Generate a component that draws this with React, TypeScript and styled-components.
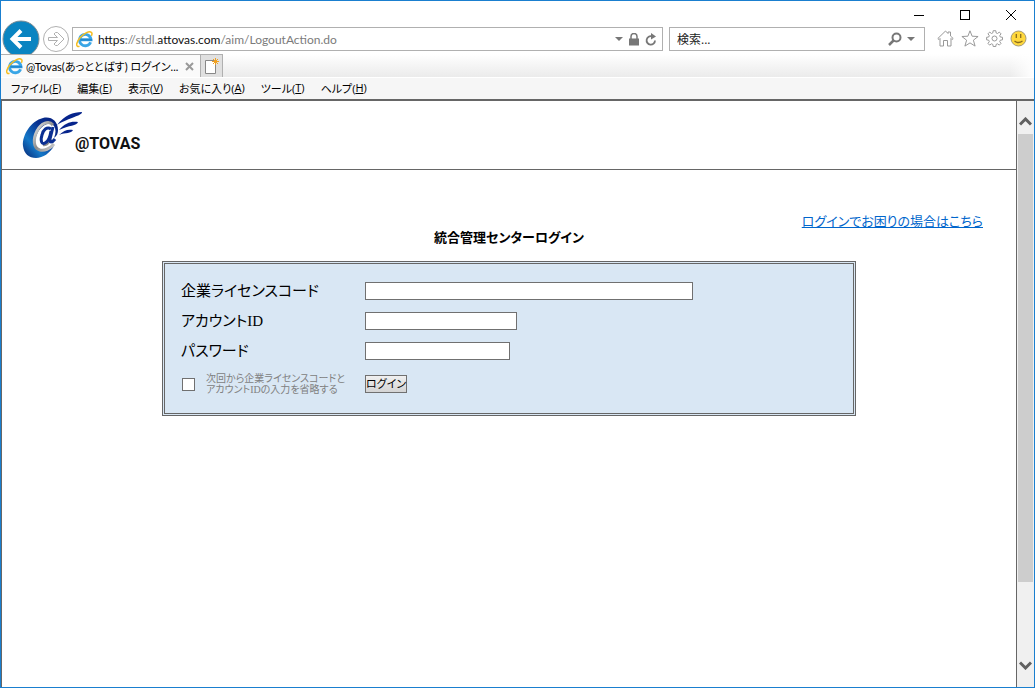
import React, { useState } from 'react';
import styled, { createGlobalStyle, css } from 'styled-components';

const UI = '"Open Sans", "Noto Sans CJK JP", sans-serif';
const NARROW_UI = 'Lato, "Noto Sans CJK JP", sans-serif';
const PAGE = '"Liberation Serif", "Noto Sans CJK JP", sans-serif';

const GlobalStyle = createGlobalStyle`
  * { box-sizing: border-box; }
  body { margin: 0; background: #fff; color: #000; font-family: ${UI}; font-size: 12px; }
  button { font: inherit; color: inherit; }
  svg { display: block; flex: none; }
`;

const Window = styled.div`
  display: flex;
  flex-direction: column;
  min-height: 100vh;
  border: 1px solid #1a7fcf;
  background: #fff;
`;

const CaptionBar = styled.div`
  display: flex;
  justify-content: flex-end;
  height: 26px;
`;

const PlainButton = styled.button`
  display: flex;
  align-items: center;
  justify-content: center;
  flex: none;
  padding: 0;
  border: 0;
  background: transparent;
`;

const CaptionButton = styled(PlainButton)`
  width: 46px;
  height: 28px;
`;

const NavBar = styled.div`
  display: flex;
  align-items: center;
  height: 24px;
  padding: 0 7px 0 1px;
`;

const NavButton = styled(PlainButton)`
  margin-right: 3px;
`;

const Box = styled.div<{ $grow?: boolean }>`
  display: flex;
  align-items: center;
  height: 24px;
  min-width: 0;
  padding-left: 3px;
  border: 1px solid #b0b0b0;
  background: #fff;
  ${(p) =>
    p.$grow
      ? css`flex: 1; gap: 5px; padding-right: 5px;`
      : css`flex: 0 0 256px; gap: 5px; margin-left: 6px; padding-right: 9px;`}
`;

const Address = styled.div`
  flex: 1;
  min-width: 0;
  overflow: hidden;
  white-space: nowrap;
  font-family: ${NARROW_UI};
  color: #7b7b7b;
  b { color: #111; font-weight: 400; }
`;

const SearchInput = styled.input`
  flex: 1;
  min-width: 0;
  padding: 0 4px;
  border: 0;
  outline: 0;
  background: transparent;
  font: 12px ${UI};
  font-feature-settings: 'palt';
  &::placeholder { color: #222; opacity: 1; }
`;

const Tools = styled.div`
  display: flex;
  gap: 7px;
  margin-left: 12px;
  padding-bottom: 2px;
`;

const TabBar = styled.div`
  position: relative;
  display: flex;
  height: 24px;
  margin-top: 3px;
  background:
    linear-gradient(to left, #fff, #fff0 24px),
    linear-gradient(#fff, #ebebeb);
  border-bottom: 1px solid #fff;
`;

const Tab = styled.div`
  display: flex;
  align-items: center;
  gap: 3px;
  width: 199px;
  padding: 0 6px 0 5px;
  border-top: 1px solid #b0b0b0;
  background: #fafafa;
  white-space: nowrap;
  font-family: ${NARROW_UI};
  font-feature-settings: 'palt';
`;

const TabTitle = styled.span`
  flex: 1;
  min-width: 0;
  font-size: 11px;
`;

const NewTab = styled(PlainButton)`
  width: 23px;
  border: 1px solid #b0b0b0;
  border-bottom: 0;
  background: #e0e0e0;
`;

const MenuBar = styled.nav`
  display: flex;
  gap: 16px;
  height: 23px;
  padding: 0 0 2px 10px;
  background: #f6f6f6;
  border-bottom: 2px solid #666;
`;

const MenuItem = styled(PlainButton)`
  font-size: 11px;
  font-feature-settings: 'palt';
  white-space: pre;
`;

const Viewport = styled.div`
  display: flex;
  flex: 1;
`;

const Page = styled.main`
  flex: 1;
  min-width: 0;
  border-left: 1px solid #666;
  border-right: 1px solid #666;
  font-family: ${PAGE};
  font-feature-settings: 'palt';
`;

const PageHeader = styled.header`
  display: flex;
  height: 69px;
  padding: 10px 20px;
  border-bottom: 1px solid #666;
`;

const Wordmark = styled.span`
  margin: 21px 0 0 -9px;
  font: bold 16px/24px Roboto, "Liberation Sans", sans-serif;
  color: #111;
`;

const HelpRow = styled.div`
  display: flex;
  justify-content: flex-end;
  padding: 44px 33px 0 0;
`;

const HelpLink = styled.a`
  font-size: 13px;
  line-height: 16px;
  color: #0066cc;
`;

const Title = styled.h1`
  margin: 0 0 15px;
  text-align: center;
  font-size: 13px;
  line-height: 16px;
  font-weight: 700;
`;

const Panel = styled.form`
  max-width: 694px;
  margin: 0 auto;
  padding: 12px 16px 11px;
  border: 3px double #666;
  background: #d9e7f4;
`;

const Row = styled.div<{ $tall?: boolean }>`
  display: flex;
  align-items: center;
  height: ${(p) => (p.$tall ? 36 : 30)}px;
`;

const Label = styled.label`
  flex: 0 0 184px;
  font-size: 15px;
  line-height: 20px;
`;

const Field = styled.input<{ $width: number }>`
  width: ${(p) => p.$width}px;
  height: 18px;
  padding: 0 2px;
  border: 1px solid #707070;
  border-radius: 0;
  background: #fff;
`;

const Remember = styled.label`
  display: flex;
  align-items: center;
  gap: 11px;
  flex: 0 0 184px;
  font-size: 10px;
  line-height: 11px;
  color: #808080;
`;

const Tick = styled.input`
  appearance: none;
  width: 13px;
  height: 13px;
  margin: 0 0 0 1px;
  border: 1px solid #707070;
  background: #fff;
  &:checked { background: #555; box-shadow: inset 0 0 0 2px #fff; }
`;

const Submit = styled.button`
  width: 42px;
  height: 18px;
  padding: 0;
  border: 1px solid #707070;
  background: linear-gradient(#f0f0f0, #d4d4d4);
  font-size: 11px;
  line-height: 16px;
  white-space: nowrap;
  font-feature-settings: 'palt';
`;

const Scrollbar = styled.div`
  display: flex;
  flex-direction: column;
  width: 17px;
  padding: 12px 1px 13px;
  background: #f0f0f0;
`;

const ScrollButton = styled(PlainButton)`
  height: 17px;
`;

const Track = styled.div`
  display: flex;
  flex-direction: column;
  flex: 1;
  margin-top: 4px;
  &::after { content: ''; flex: 1; }
`;

const Thumb = styled.div`
  flex: 6;
  background: #cdcdcd;
`;

const IeLogo = () => (
  <svg width="17" height="17" viewBox="0 0 17 17" fill="none">
    <path d="M14.600 11.200A5.700 5.700 0 1 1 15 8.800H5.200" stroke="#3aa6e6" strokeWidth="2.900" />
    <path d="M4.300 8.800h11.800" stroke="#2388cf" strokeWidth="1.800" />
    <path d="M3.500 15.300C-.5 16.500-.2 11.500 4 6.800 8 2.200 13.500-.5 15.500 1.500c.8.9.5 2.200-.1 3.300" stroke="#f5bd22" strokeWidth="1.500" />
  </svg>
);

const BrandMark = () => (
  <svg width="62" height="50" viewBox="0 0 62 50">
    <defs>
      <linearGradient id="swirl" x1="0" y1="1" x2="1" y2="0">
        <stop offset="0" stopColor="#08226f" />
        <stop offset=".3" stopColor="#1478c8" />
        <stop offset=".65" stopColor="#08308f" />
        <stop offset="1" stopColor="#061f80" />
      </linearGradient>
      <linearGradient id="metal" x1="0" y1="0" x2="1" y2="1">
        <stop offset="0" stopColor="#efefef" />
        <stop offset=".5" stopColor="#8c8c8c" />
        <stop offset="1" stopColor="#d0d0d0" />
      </linearGradient>
    </defs>
    <path fill="url(#swirl)" d="M36 19C36 10 29 5 21 7 9 10 0 24 1 35c1 8 6 12 13 12 7 0 14-5 18-12-5 4-10 6-14 4-6-2-6-11-2-18 4-7 12-11 16-6 2 3 2 7 0 12 3-2 4-5 4-8z" />
    <path fill="none" stroke="url(#metal)" strokeWidth="3" d="M31 14C27 9 19 12 15 20c-4 8-4 17 3 19 4 1 10-1 14-6" />
    <path fill="none" stroke="#8c8c8c" strokeWidth="2" d="M21 34c4 1 6-2 8-6" />
    <path fill="none" stroke="#0b2f92" strokeWidth="3" d="M29 18c-4-3-8 1-9 6-2 6 0 10 3 8 3-1 5-6 6-12" />
    <path fill="none" stroke="#0b2f92" strokeWidth="3" d="M31 16l-3 12c-1 4 2 4 5 0" />
    <path fill="#06248c" d="M35 14C43 4 51 1 60 1c0 4-12 5-25 13zM37 19c6-7 12-9 19-8-1 4-9 3-19 8zM37 24c5-5 9-6 14-5-2 4-7 2-14 5z" />
  </svg>
);

const Chevron = ({ down }: { down?: boolean }) => (
  <svg width="13" height="9" viewBox="0 0 13 9" fill="none" stroke="#606060" strokeWidth="3">
    <path d={down ? 'M1 1.500l5.500 5.500L12 1.500' : 'M1 7.500L6.500 2 12 7.500'} />
  </svg>
);

const Caret = () => (
  <svg width="8" height="4" viewBox="0 0 8 4"><path d="M0 0h8L4 4z" fill="#777" /></svg>
);

const menus = [
  ['ファイル', 'F'],
  ['編集', 'E'],
  ['表示', 'V'],
  ['お気に入り', 'A'],
  ['ツール', 'T'],
  ['ヘルプ', 'H'],
];

export default function App() {
  const [remember, setRemember] = useState(false);
  return (
    <>
      <GlobalStyle />
      <Window>
        <CaptionBar>
          <CaptionButton aria-label="最小化">
            <svg width="10" height="10"><path d="M0 5.500h10" stroke="#000" /></svg>
          </CaptionButton>
          <CaptionButton aria-label="最大化">
            <svg width="10" height="10"><rect x=".5" y=".5" width="9" height="9" fill="none" stroke="#000" /></svg>
          </CaptionButton>
          <CaptionButton aria-label="閉じる">
            <svg width="10" height="10"><path d="M0 0l10 10M10 0L0 10" stroke="#000" /></svg>
          </CaptionButton>
        </CaptionBar>

        <NavBar>
          <NavButton aria-label="戻る">
            <svg width="38" height="38" viewBox="0 0 38 38">
              <circle cx="19" cy="19" r="18" fill="#0a84c1" stroke="#7d8c94" />
              <path d="M29 19H11M19 10.500L10.500 19l8.500 8.500" fill="none" stroke="#fff" strokeWidth="4" />
            </svg>
          </NavButton>
          <NavButton aria-label="進む">
            <svg width="26" height="26" viewBox="0 0 26 26" fill="none" stroke="#b0b0b0">
              <circle cx="13" cy="13" r="12.500" fill="#fff" />
              <path d="M5.500 11.500h9L11 8l1.500-1.500h2L21 13l-6.500 6.500h-2L11 18l3.500-3.500h-9z" />
            </svg>
          </NavButton>
          <Box $grow>
            <IeLogo />
            <Address><b>https</b>://stdl.<b>attovas.com</b>/aim/LogoutAction.do</Address>
            <Caret />
            <PlainButton aria-label="セキュリティ">
              <svg width="12" height="13" viewBox="0 0 12 13">
                <rect x="1" y="5.500" width="10" height="7" fill="#777" />
                <path d="M3 6V3.500a3 3 0 0 1 6 0V6" fill="none" stroke="#777" strokeWidth="1.500" />
              </svg>
            </PlainButton>
            <PlainButton aria-label="更新">
              <svg width="12" height="13" viewBox="0 0 12 13">
                <path d="M10 7.500A4.200 4.200 0 1 1 7 3.400" fill="none" stroke="#777" strokeWidth="1.800" />
                <path d="M6 0v6.500L11 3.500z" fill="#777" />
              </svg>
            </PlainButton>
          </Box>
          <Box>
            <SearchInput aria-label="検索" placeholder="検索..." />
            <PlainButton aria-label="検索する">
              <svg width="14" height="14" viewBox="0 0 14 14" fill="none" stroke="#777">
                <circle cx="8.500" cy="5.500" r="4" strokeWidth="2" />
                <path d="M5.500 8.500L1 13" strokeWidth="2.500" />
              </svg>
            </PlainButton>
            <Caret />
          </Box>
          <Tools>
            <PlainButton aria-label="ホーム">
              <svg width="17" height="17" viewBox="0 0 17 17" fill="none" stroke="#999">
                <path d="M.8 8.500L8.500 1 11 3.500V2h2.500v4L16.200 8.500 15 9.500l-1-1V16h-3.500v-5.500h-4V16H3V8.500l-1 1z" />
              </svg>
            </PlainButton>
            <PlainButton aria-label="お気に入り">
              <svg width="18" height="17" viewBox="0 0 18 17" fill="none" stroke="#999">
                <path d="M9 .8l2.100 5.400 6 .3-4.700 3.700 1.700 5.900L9 12.900l-5.100 3.200 1.700-5.900L.9 6.500l6-.3z" />
              </svg>
            </PlainButton>
            <PlainButton aria-label="ツール">
              <svg width="17" height="17" viewBox="0 0 17 17" fill="none" stroke="#999">
                <path d="M7.200.7h2.600l.3 2.200 1.400.6 1.800-1.400 1.700 1.700-1.300 1.900.6 1.300 2.200.3v2.500l-2.200.4-.6 1.400 1.300 1.800-1.700 1.700-1.800-1.300-1.400.6-.3 2.100H7.200l-.4-2.100-1.300-.6-1.900 1.300L2 13.400l1.300-1.800-.6-1.400L.6 9.800V7.300L2.700 7l.6-1.300L2 3.800l1.700-1.700 1.800 1.400 1.300-.6z" />
                <circle cx="8.500" cy="8.500" r="2.500" />
              </svg>
            </PlainButton>
            <PlainButton aria-label="フィードバック">
              <svg width="17" height="17" viewBox="0 0 17 17">
                <circle cx="8.500" cy="8.500" r="7.500" fill="#ffd83d" stroke="#a39a78" />
                <path d="M6.300 4v4M10.700 4v4M4.500 11q4 3 8 0" fill="none" stroke="#8a6d1c" strokeWidth="1.300" />
              </svg>
            </PlainButton>
          </Tools>
        </NavBar>

        <TabBar>
          <Tab>
            <IeLogo />
            <TabTitle>@Tovas(あっととばす) ログイン...</TabTitle>
            <PlainButton aria-label="タブを閉じる">
              <svg width="9" height="9" viewBox="0 0 9 9"><path d="M1 1l7 7M8 1L1 8" stroke="#999" strokeWidth="2" /></svg>
            </PlainButton>
          </Tab>
          <NewTab aria-label="新しいタブ">
            <svg width="14" height="16" viewBox="0 0 14 16">
              <path d="M.5 2.500h10v13H.5z" fill="#fff" stroke="#888" />
              <path d="M10.500 0v7M7 3.500h7M8 1l5 5M13 1L8 6" stroke="#f0a020" />
            </svg>
          </NewTab>
        </TabBar>

        <MenuBar>
          {menus.map(([name, key]) => (
            <MenuItem key={key}>{name}(<u>{key}</u>)</MenuItem>
          ))}
        </MenuBar>

        <Viewport>
          <Page>
            <PageHeader>
              <BrandMark />
              <Wordmark>@TOVAS</Wordmark>
            </PageHeader>
            <HelpRow>
              <HelpLink href="#help">ログインでお困りの場合はこちら</HelpLink>
            </HelpRow>
            <Title>統合管理センターログイン</Title>
            <Panel onSubmit={(e) => e.preventDefault()}>
              <Row>
                <Label htmlFor="license">企業ライセンスコード</Label>
                <Field id="license" type="text" $width={328} />
              </Row>
              <Row>
                <Label htmlFor="account">アカウントID</Label>
                <Field id="account" type="text" $width={152} />
              </Row>
              <Row>
                <Label htmlFor="password">パスワード</Label>
                <Field id="password" type="password" $width={145} />
              </Row>
              <Row $tall>
                <Remember>
                  <Tick type="checkbox" checked={remember} onChange={(e) => setRemember(e.target.checked)} />
                  <span>次回から企業ライセンスコードと<br />アカウントIDの入力を省略する</span>
                </Remember>
                <Submit type="submit">ログイン</Submit>
              </Row>
            </Panel>
          </Page>
          <Scrollbar>
            <ScrollButton aria-label="上へ"><Chevron /></ScrollButton>
            <Track><Thumb /></Track>
            <ScrollButton aria-label="下へ"><Chevron down /></ScrollButton>
          </Scrollbar>
        </Viewport>
      </Window>
    </>
  );
}
